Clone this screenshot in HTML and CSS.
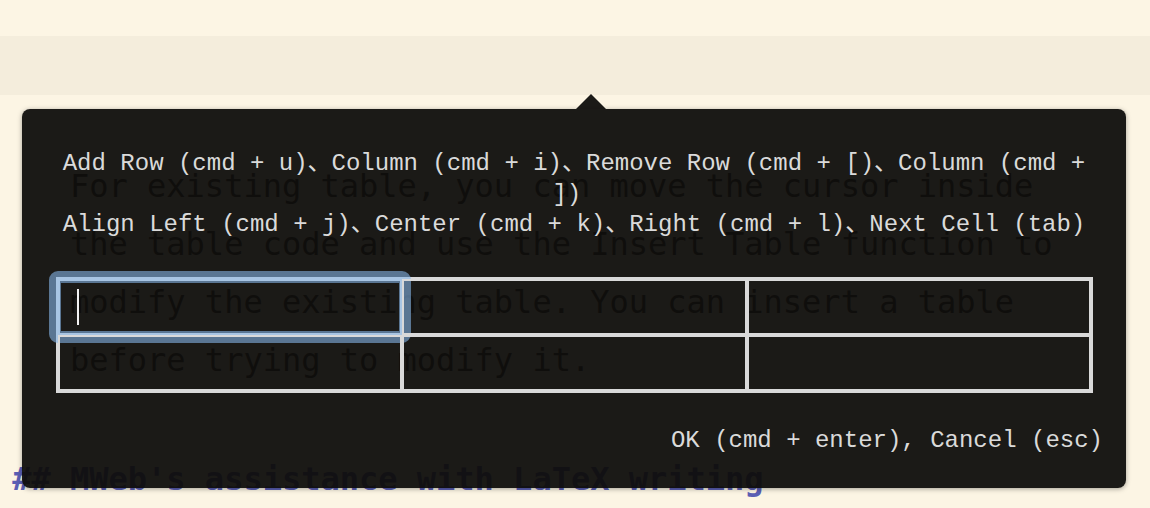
FILE: index.html
```html
<!DOCTYPE html>
<html lang="en">
<head>
<meta charset="utf-8">
<title>Insert Table</title>
<link rel="stylesheet" href="styles.css">
</head>
<body>
<div class="editor">
  <div class="band"></div>
  <p class="para">For existing table, you can move the cursor inside the table code and use the Insert Table function to modify the existing table. You can insert a table before trying to modify it.</p>
  <h2 class="heading">## MWeb's assistance with LaTeX writing</h2>
</div>
<div class="popup">
  <p class="hint">Add Row (cmd + u)、Column (cmd + i)、Remove Row (cmd + [)、Column (cmd + ])&nbsp;</p>
  <p class="hint">Align Left (cmd + j)、Center (cmd + k)、Right (cmd + l)、Next Cell (tab)</p>
  <table class="grid">
    <tr>
      <td><div class="cell"><span class="caret"></span><span class="ring"></span></div></td>
      <td><div class="cell"></div></td>
      <td><div class="cell"></div></td>
    </tr>
    <tr>
      <td><div class="cell"></div></td>
      <td><div class="cell"></div></td>
      <td><div class="cell"></div></td>
    </tr>
  </table>
  <p class="footer">OK (cmd + enter), Cancel (esc)</p>
</div>
</body>
</html>
```
FILE: styles.css
```css
html, body {
  margin: 0;
  padding: 0;
  height: 100%;
  overflow: hidden;
}
body {
  background: #fcf5e4;
  position: relative;
}
.editor {
  font-family: "DejaVu Sans Mono", monospace;
  font-size: 32px;
  line-height: 58px;
  color: #2a2a2a;
}
.band {
  margin-top: 36px;
  height: 59px;
  background: #f4eddc;
}
.para {
  margin: 62px 70px 0 70px;
}
.heading {
  margin: 61px 0 0 0;
  padding-left: 70px;
  text-indent: -3ch;
  font-size: 32px;
  font-weight: bold;
  color: #5b5fb4;
}
.popup {
  position: absolute;
  left: 22px;
  top: 109px;
  width: 1104px;
  box-sizing: border-box;
  padding: 40px 23px 32px 34px;
  background: rgba(14, 13, 11, 0.945);
  border-radius: 8px;
  box-shadow: 0 1px 5px rgba(0, 0, 0, 0.35);
  color: #dadada;
  font-family: "Liberation Mono", "Noto Sans CJK JP", monospace;
  font-size: 24px;
  line-height: 30.5px;
}
.popup::before {
  content: "";
  position: absolute;
  top: -15px;
  left: 554px;
  border-left: 15px solid transparent;
  border-right: 15px solid transparent;
  border-bottom: 15px solid rgba(14, 13, 11, 0.945);
}
.hint {
  margin: 0;
  padding: 0 17px 0 6px;
  text-align: center;
}
.grid {
  margin: 36px 0 0 0;
  width: 1037px;
  border: 2px solid #d9d9d9;
  border-spacing: 0;
  table-layout: fixed;
}
.grid td {
  padding: 0;
}
.cell {
  position: relative;
  height: 52px;
  border: 2px solid #d9d9d9;
  display: flex;
  align-items: center;
  padding-left: 17px;
}
.caret {
  width: 2px;
  height: 36px;
  background: #f2f2f2;
}
.ring {
  position: absolute;
  left: -11px;
  right: -11px;
  top: -10px;
  bottom: -10px;
  border: 12px solid rgba(134, 183, 234, 0.59);
  border-radius: 9px;
}
.footer {
  margin: 33px 0 0 0;
  text-align: right;
}
```
